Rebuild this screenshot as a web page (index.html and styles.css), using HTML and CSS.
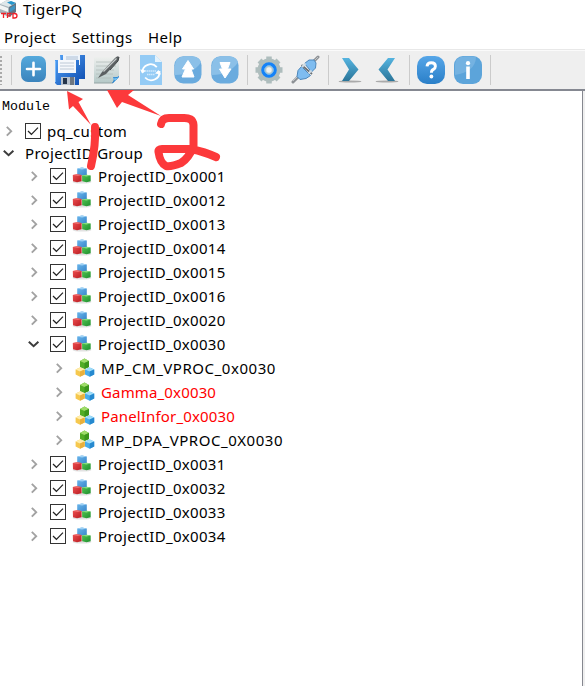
FILE: index.html
```
<!DOCTYPE html>
<html lang="en">
<head>
<meta charset="utf-8">
<title>TigerPQ</title>
<link rel="stylesheet" href="styles.css">
</head>
<body>
<svg class="defs" aria-hidden="true">
  <defs>
    <linearGradient id="gBlue" x1="0" y1="0" x2="0" y2="1"><stop offset="0" stop-color="#56a6e8"/><stop offset="1" stop-color="#2a7fc8"/></linearGradient>
    <linearGradient id="gAdd" x1="0" y1="0" x2="0" y2="1"><stop offset="0" stop-color="#55a9dc"/><stop offset="1" stop-color="#3b84bd"/></linearGradient>
    <linearGradient id="gChev" x1="0" y1="0" x2="0" y2="1"><stop offset="0" stop-color="#55b4e0"/><stop offset="1" stop-color="#2b7599"/></linearGradient>
    <linearGradient id="gDisk" x1="0" y1="0" x2="1" y2="1"><stop offset="0" stop-color="#4e9cf2"/><stop offset="1" stop-color="#1252b4"/></linearGradient>
    <linearGradient id="gPaper" x1="0" y1="0" x2="0" y2="1"><stop offset="0" stop-color="#eef0ee"/><stop offset="1" stop-color="#b5c9c8"/></linearGradient>
    <linearGradient id="gRed" x1="0" y1="0" x2="1" y2="1"><stop offset="0" stop-color="#ee4f50"/><stop offset="1" stop-color="#b81c22"/></linearGradient>
    <linearGradient id="gGreen" x1="0" y1="0" x2="1" y2="1"><stop offset="0" stop-color="#52c452"/><stop offset="1" stop-color="#1f8f2e"/></linearGradient>
    <linearGradient id="gSky" x1="0" y1="0" x2="1" y2="1"><stop offset="0" stop-color="#6cb6ec"/><stop offset="1" stop-color="#3887cb"/></linearGradient>
  </defs>
  <symbol id="closed" viewBox="0 0 12 12"><path d="M3.8 1.8 8.2 6.2 3.8 10.6" fill="none" stroke="#a2a2a2" stroke-width="1.9"/></symbol>
  <symbol id="open" viewBox="0 0 12 12"><path d="M.8 3.8 5.6 8.2 10.4 3.8" fill="none" stroke="#3c3c3c" stroke-width="2"/></symbol>
  <symbol id="check" viewBox="0 0 16 16"><rect x=".5" y=".5" width="15" height="15" fill="#fff" stroke="#333"/><path d="M3 8 6.4 11.3 13 4.7" fill="none" stroke="#222" stroke-width="1.2"/></symbol>
  <symbol id="cubes" viewBox="0 0 20 18">
    <ellipse cx="10" cy="15" rx="9.5" ry="1.6" fill="#e2e2e2"/>
    <path d="M5.2 1.5 10 .5l4.8 1v7H5.2z" fill="url(#gSky)"/><path d="M5.2 1.5 10 .5l4.8 1-4.8.9z" fill="#9fd2f5"/>
    <path d="M.8 8 5 7.3l4.6.7v6.2L5 15.2l-4-1z" fill="url(#gRed)"/><path d="M.8 8 5 7.3l4.6.7L5.8 9z" fill="#ee7070"/>
    <path d="M10 8.6 14.5 7.8l4.2.8v5.6l-4.2 1-4.3-1z" fill="url(#gGreen)"/><path d="M10 8.6l4.5-.8 4.2.8-4.3.9z" fill="#86dc80"/>
  </symbol>
  <symbol id="hexes" viewBox="0 0 20 20">
    <path d="M5 3 9.5.5 14 3v6L9.5 11 5 9z" fill="#52ad26"/><path d="M5 3 9.5.5 14 3 9.5 5z" fill="#9fdc6a"/><path d="M9.5 5v6L14 9V3z" fill="#3b961c"/>
    <path d="M.6 11.5 5 9.4l4.7 2.1v4.9L5 18.8.6 16.4z" fill="#f6c84e"/><path d="M.6 11.5 5 9.4l4.7 2.1L5 13.5z" fill="#ffedaa"/><path d="M5 13.5v5.3l4.7-2.4v-4.9z" fill="#e9b03c"/>
    <path d="M10 11.5l4.7-2.1 4.5 2.1v4.9l-4.5 2.4-4.7-2.4z" fill="#48adeb"/><path d="m10 11.5 4.7-2.1 4.5 2.1-4.5 2z" fill="#9fdcf8"/><path d="M14.7 13.5v5.3l4.5-2.4v-4.9z" fill="#2689cf"/>
  </symbol>
</svg>

<header class="titlebar">
  <svg class="appicon" viewBox="0 0 19 20">
    <path d="M0 4 7 0l9 3v9l-7 5-9-4z" fill="#a9b4bb"/><path d="M0 4 7 0l9 3-7 4z" fill="#dfe7ea"/><path d="M7 2.5 11 1l5 2-4 2z" fill="#2696cc"/>
    <path d="M9 7v10l7-5V3z" fill="#627585"/><path d="M0 5l8 3v4L0 9z" fill="#f3f5f5"/><path d="M10 8l5-3v4l-5 3z" fill="#3f96c4"/>
    <path d="M1 13.5h5M3.5 13.5v4.5M7.5 18v-4.5h4M7.5 15.8h3.5M13 13.5V18h1.5q2.5 0 2.5-2.2t-2.5-2.3z" fill="none" stroke="#f02028" stroke-width="1.3"/>
  </svg>
  <span>TigerPQ</span>
</header>
<nav class="menubar"><span class="m-project">Project</span><span class="m-settings">Settings</span><span class="m-help">Help</span></nav>
<div class="toolbar">
  <div class="handle"></div>
  <i class="sep"></i>
  <svg class="tool" viewBox="0 0 37 30"><rect x="6" y="1" width="25" height="26" rx="7" fill="url(#gAdd)"/><path d="M18.5 7.7v12.6M12 14h13" stroke="#fff" stroke-width="2.6" stroke-linecap="round"/></svg>
  <svg class="tool" viewBox="0 0 37 30">
    <path d="M8 0h25v24H10z" fill="url(#gDisk)"/><path d="M11 0h17v10H11z" fill="#eef4fb"/><path d="M14 2h12M14 4h12" stroke="#9db3cc" stroke-width=".8"/>
    <path d="M3 5h24v25H5l-2-2z" fill="url(#gDisk)"/><path d="M6 5h18v13H6z" fill="#f5f8fc"/><path d="M8 8h14M8 11h14M8 14h14" stroke="#aebccd" stroke-width=".8"/>
    <path d="M9 22h14v8H9z" fill="#b9c2cc"/><path d="M11 23h4v6h-4z" fill="#25354b"/><path d="M18 22h4v8h-4z" fill="#6d7680"/><path d="M3.5 6v21" stroke="#79b9fa"/>
  </svg>
  <svg class="tool" viewBox="0 0 37 30">
    <path d="M5 2h25v20l-6 6H5z" fill="url(#gPaper)"/><path d="M7 7h20M7 11h20M7 15h18M7 19h17M7 23h15" stroke="#b2bdba" stroke-width=".8"/><path d="M5 28h19" stroke="#96a5a5"/><path d="M23 28q3-3 1-6 4 1 6-1v1l-6 6z" fill="#1679d0"/><path d="M24 23q4 1 6-2l-4 5z" fill="#74c5f5"/>
    <path d="m9 23 4-6L26 3q3-3 4-1l-1 4-12 13z" fill="#5b6062"/><path d="m14.5 16.5 13-13" stroke="#c6cccc" stroke-width="1.3"/><path d="m21 15 8-9 1-4" fill="none" stroke="#3f4446"/>
  </svg>
  <i class="sep"></i>
  <svg class="tool" viewBox="0 0 37 30">
    <path d="M7 0h15l7 7v23H7z" fill="#94cbf5"/><path d="M22 0v7h7z" fill="#e4f3fd"/>
    <path d="M9.3 17.5a8.3 8.3 0 0 1 14.5-5.4M26.5 16a8.3 8.3 0 0 1-14.4 6.5" fill="none" stroke="#fff" stroke-width="1.8"/><path d="m7 14.5 2.5 4 3.5-3zm21 5-2.5-4.5-3.5 3.5z" fill="#fff"/><path d="M12 16h11M14 19.5h8" stroke="#d0e9fc" stroke-width="1.5" stroke-dasharray="1.5 .5"/>
  </svg>
  <svg class="tool" viewBox="0 0 37 30"><rect x="4.3" y="1.3" width="27.2" height="27.2" rx="9" fill="#6aabde"/><path d="M5 20V10q0-8 9-8.5h9q7 .5 8 6Q22 20 5 20z" fill="#8bc0e8"/><path d="m18 5.5 5.5 8.5H21l3 8H12l3.5-8h-3z" fill="#fff" stroke="#fff" stroke-linejoin="round"/></svg>
  <svg class="tool" viewBox="0 0 37 30"><rect x="4.3" y="1.3" width="27.2" height="27.2" rx="9" fill="#6aabde"/><path d="M5 20V10q0-8 9-8.5h9q7 .5 8 6Q22 20 5 20z" fill="#8bc0e8"/><path d="M13 7.5h10L20.5 14h3.5l-6 9-5.5-9h3z" fill="#fff" stroke="#fff" stroke-linejoin="round"/></svg>
  <i class="sep"></i>
  <svg class="tool" viewBox="0 0 37 30">
    <circle cx="18" cy="15" r="9" fill="none" stroke="#aebdbd" stroke-width="5"/><path d="M18 1.5v4M18 24.5v4M4.5 15h4M27.5 15h4M8.5 5.5l3 3M24.5 21.5l3 3M27.5 5.5l-3 3M11.5 21.5l-3 3" stroke="#aebdbd" stroke-width="5.5"/><circle cx="18" cy="15" r="6.2" fill="#bccaca" stroke="#1482f8" stroke-width="3.2"/><circle cx="18" cy="15" r="4.3" fill="none" stroke="#72b9ee"/><circle cx="18" cy="15" r="2.7" fill="#edf0f0"/>
  </svg>
  <svg class="tool" viewBox="0 0 37 30">
    <path d="m5 27 6-6M25 7l5-5" stroke="#8d9195" stroke-width="3" stroke-linecap="round"/><path d="m5 26 5-5M26 6l4-4" stroke="#c1c4c6"/>
    <path d="M16.5 8.5 21 5h5l2 3-.5 5-4 4zM13.5 11.5l9 9-4.5 3-6 1-3-3 1-6z" fill="#7ebcf0" stroke="#4d87bb"/><path d="m13.5 10 10.5 9" stroke="#676f76" stroke-width="1.7"/><path d="m14 12 3.5-3.5M20.5 18.5l3-3" stroke="#d1dce4" stroke-width="1.8"/>
  </svg>
  <i class="sep"></i>
  <svg class="tool" viewBox="0 0 37 30"><ellipse cx="18" cy="26.5" rx="11.5" ry="1.1" fill="#aaa"/><path d="M10 3h7l9.5 11.5L17 26h-7l7-11.5z" fill="url(#gChev)"/></svg>
  <svg class="tool" viewBox="0 0 37 30"><ellipse cx="18" cy="26.5" rx="11.5" ry="1.1" fill="#aaa"/><path d="M26 3h-7L9.5 14.5 19 26h7l-7.5-11.5z" fill="url(#gChev)"/></svg>
  <i class="sep"></i>
  <svg class="tool" viewBox="0 0 37 30"><rect x="4" y="1" width="28" height="28" rx="10" fill="url(#gBlue)"/><path d="M14 11.3q.3-3.5 4.2-3.5 4.2 0 4.2 3.4 0 2-2 3.2-2 1-2 3.4" fill="none" stroke="#fff" stroke-width="2.9"/><circle cx="18.4" cy="21.5" r="1.9" fill="#fff"/></svg>
  <svg class="tool" viewBox="0 0 37 30"><rect x="4" y="1" width="28" height="28" rx="9" fill="#5ca4da"/><path d="M5 20V10q0-8 9-8.5h9q3 0 3 1Q25 17 5 20z" fill="#74b2e1"/><circle cx="18" cy="8.2" r="2.1" fill="#fff"/><path d="M16.2 11.5h3.6V24h-3.6z" fill="#fff"/></svg>
  <i class="sep"></i>
</div>
<main class="panel">
  <div class="head">Module</div>
  <ul class="tree" id="tree"></ul>
</main>
<svg class="marks" viewBox="0 0 585 686" aria-hidden="true">
  <path d="m67 91 16 8-4.500 3L91 125 73 106l-4 3.500z"/>
  <path d="M107 90h27l-6 5 33 21-39-14-5 6z"/>
  <path class="pen" d="M95 127Q96 145 91 166"/>
  <path class="pen" d="M161 124Q162 118 169 118H182Q193 117 193.500 125V146Q189 158 181 163Q171 167 166 166Q160 163 158.500 152Q158 149 162 149H191Q205 152 216 157"/>
</svg>
<script src="tree.js"></script>
</body>
</html>
```
FILE: styles.css
```
* { box-sizing: border-box; }
body { margin: 0; width: 585px; height: 686px; overflow: hidden; background: #fff; color: #000; font: 15px/24px "Noto Sans", "Open Sans", sans-serif; letter-spacing: .32px; display: flex; flex-direction: column; }
.defs { position: absolute; width: 0; height: 0; }
.titlebar { height: 25px; display: flex; align-items: flex-start; gap: 4px; line-height: 19px; letter-spacing: .4px; flex: none; }
.appicon { width: 19px; height: 20px; }
.menubar { height: 24px; display: flex; padding-left: 4px; line-height: 25px; letter-spacing: .45px; flex: none; }
.m-project { width: 68px; }
.m-settings { width: 76px; }
.toolbar { height: 42px; flex: none; display: flex; align-items: flex-start; padding-top: 5px; background: #efefef; border-top: 1px solid #e8e8e8; border-bottom: 2px solid #858891; box-shadow: inset 0 1px #fafafa; }
.handle { width: 8px; height: 30px; flex: none; background: radial-gradient(circle at 1px 2px, #aaa 1px, transparent 1.5px) 0 0 / 8px 4px repeat-y; }
.sep { width: 7px; height: 30px; flex: none; background: linear-gradient(#cbcbcb, #cbcbcb) 3px 0 / 1px 100% no-repeat; }
.tool { width: 37px; height: 30px; flex: none; }
.panel { flex: 1; border-right: 1px solid #85878f; margin-right: 2px; box-shadow: 2px 0 #efefef; padding-top: 5px; }
.head { height: 24px; padding-left: 2px; font: 13.33px/22px "Liberation Mono", monospace; letter-spacing: 0; }
.tree { list-style: none; margin: 0; padding: 0; }
.row { height: 24px; display: flex; align-items: center; white-space: nowrap; }
.top { height: 22px; padding-left: 3px; }
.mid { padding-left: 28px; }
.leaf { padding-left: 53px; letter-spacing: .54px; }
.arrow { width: 12px; height: 12px; flex: none; }
.box { width: 16px; height: 16px; margin-left: 10px; flex: none; }
.cubes { width: 20px; height: 18px; margin: 0 6px 0 6px; flex: none; }
.hexes { width: 20px; height: 20px; margin: 0 6px 0 10px; flex: none; }
.top .label { margin-left: 6px; }
.group .label { margin-left: 10px; }
.changed { color: #f00; letter-spacing: .15px; }
.marks { position: absolute; left: 0; top: 0; width: 585px; height: 686px; fill: #fc393b; pointer-events: none; }
.pen { fill: none; stroke: #fc393b; stroke-width: 8; stroke-linecap: round; stroke-linejoin: round; }
```
FILE: tree.js
```
const icon = (id, cls) => `<svg class="${cls}"><use href="#${id}"/></svg>`;
const row = (cls, parts, label) => `<li class="row ${cls}">${parts}<span class="label">${label}</span></li>`;
const leaves = [["MP_CM_VPROC_0x0030", ""], ["Gamma_0x0030", "changed"], ["PanelInfor_0x0030", "changed"], ["MP_DPA_VPROC_0X0030", ""]];
let html = row("top", icon("closed", "arrow") + icon("check", "box"), "pq_custom");
html += row("top group", icon("open", "arrow"), "ProjectID Group");
for (const id of ["0001", "0012", "0013", "0014", "0015", "0016", "0020", "0030", "0031", "0032", "0033", "0034"]) {
  const expanded = id === "0030";
  html += row("mid", icon(expanded ? "open" : "closed", "arrow") + icon("check", "box") + icon("cubes", "cubes"), "ProjectID_0x" + id);
  if (expanded) {
    for (const [name, state] of leaves) html += row("leaf " + state, icon("closed", "arrow") + icon("hexes", "hexes"), name);
  }
}
document.getElementById("tree").innerHTML = html;
```
